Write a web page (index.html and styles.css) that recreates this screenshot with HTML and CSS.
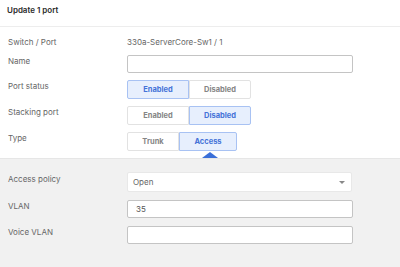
FILE: index.html
```html
<!DOCTYPE html>
<html lang="en">
<head>
  <meta charset="UTF-8" />
  <title>Update 1 port</title>
  <link rel="stylesheet" href="styles.css">
</head>
<body>
  <div class="panel">
    <div class="panel-header">Update 1 port</div>

    <div class="form-top">
      <div class="row">
        <span class="label">Switch / Port</span>
        <span class="value">330a-ServerCore-Sw1 / 1</span>
      </div>
      <div class="row">
        <span class="label">Name</span>
        <input type="text" class="field" />
      </div>
      <div class="row row-btns">
        <span class="label">Port status</span>
        <div class="toggle">
          <button class="tbtn active">Enabled</button>
          <button class="tbtn">Disabled</button>
        </div>
      </div>
      <div class="row row-btns">
        <span class="label">Stacking port</span>
        <div class="toggle">
          <button class="tbtn">Enabled</button>
          <button class="tbtn active">Disabled</button>
        </div>
      </div>
      <div class="row row-btns">
        <span class="label">Type</span>
        <div class="toggle">
          <button class="tbtn tbtn-trunk">Trunk</button>
          <button class="tbtn tbtn-access active">Access<span class="pointer"></span></button>
        </div>
      </div>
    </div>

    <div class="form-sub">
      <div class="row row-select">
        <span class="label">Access policy</span>
        <div class="select">
          <span>Open</span>
          <span class="caret"></span>
        </div>
      </div>
      <div class="row">
        <span class="label">VLAN</span>
        <input type="text" class="field" value="35" />
      </div>
      <div class="row">
        <span class="label">Voice VLAN</span>
        <input type="text" class="field" />
      </div>
    </div>
  </div>
</body>
</html>
```

FILE: styles.css
```css
body {
  margin: 0;
  font-family: "Inter", "Liberation Sans", sans-serif;
  background-color: #ffffff;
  color: #666;
  width: 400px;
  height: 267px;
  overflow: hidden;
}

.panel {
  display: flex;
  flex-direction: column;
  height: 267px;
}

.panel-header {
  height: 27px;
  box-sizing: border-box;
  padding: 4px 7px 0;
  font-size: 8px;
  line-height: 12px;
  font-weight: 600;
  color: #2a2a2a;
  border-bottom: 1px solid #ededed;
}

.form-top {
  padding: 9px 0 7px 8px;
  display: flex;
  flex-direction: column;
  gap: 7px;
  position: relative;
}

.row {
  display: grid;
  grid-template-columns: 119px 226px;
  align-items: start;
}

.label {
  font-size: 8px;
  line-height: 12px;
  color: #666;
}

.value {
  font-size: 8px;
  line-height: 12px;
  color: #666;
}

.field {
  width: 226px;
  height: 18px;
  box-sizing: border-box;
  margin: 0;
  border: 1px solid #c4c4c4;
  border-radius: 2px;
  padding: 0 8px;
  font-family: "Inter", "Liberation Sans", sans-serif;
  font-size: 8px;
  color: #555;
  background: #fff;
}

.toggle {
  display: flex;
}

.tbtn {
  width: 62px;
  height: 19px;
  margin: 0;
  padding: 0;
  box-sizing: border-box;
  border: 1px solid #e2e2e2;
  background: #fff;
  font-family: "Inter", "Liberation Sans", sans-serif;
  font-size: 7.5px;
  font-weight: 700;
  color: #858585;
  position: relative;
}

.tbtn:first-child {
  border-radius: 2px 0 0 2px;
}

.tbtn:last-child {
  border-radius: 0 2px 2px 0;
}

.tbtn.active {
  background: #e7effd;
  border-color: #a8c2f3;
  color: #4472d8;
}

.tbtn-trunk {
  width: 52px;
}

.tbtn-access {
  width: 58px;
}

.pointer {
  position: absolute;
  left: 22px;
  bottom: -8px;
  width: 0;
  height: 0;
  border-left: 8px solid transparent;
  border-right: 8px solid transparent;
  border-bottom: 6px solid #3a6fd8;
}

.form-sub {
  flex: 1;
  background: #f1f1f1;
  border-top: 1px solid #e6e6e6;
  padding: 13px 0 0 8px;
  display: flex;
  flex-direction: column;
  gap: 8px;
}

.select {
  width: 225px;
  height: 20px;
  box-sizing: border-box;
  background: #fff;
  border: 1px solid #e8e8e8;
  border-radius: 2px;
  display: flex;
  align-items: center;
  justify-content: space-between;
  padding: 0 6px 0 5px;
  font-size: 8px;
  color: #666;
}

.caret {
  width: 0;
  height: 0;
  border-left: 3px solid transparent;
  border-right: 3px solid transparent;
  border-top: 3px solid #888;
}

.row-select .label {
  padding-top: 1px;
}
```
